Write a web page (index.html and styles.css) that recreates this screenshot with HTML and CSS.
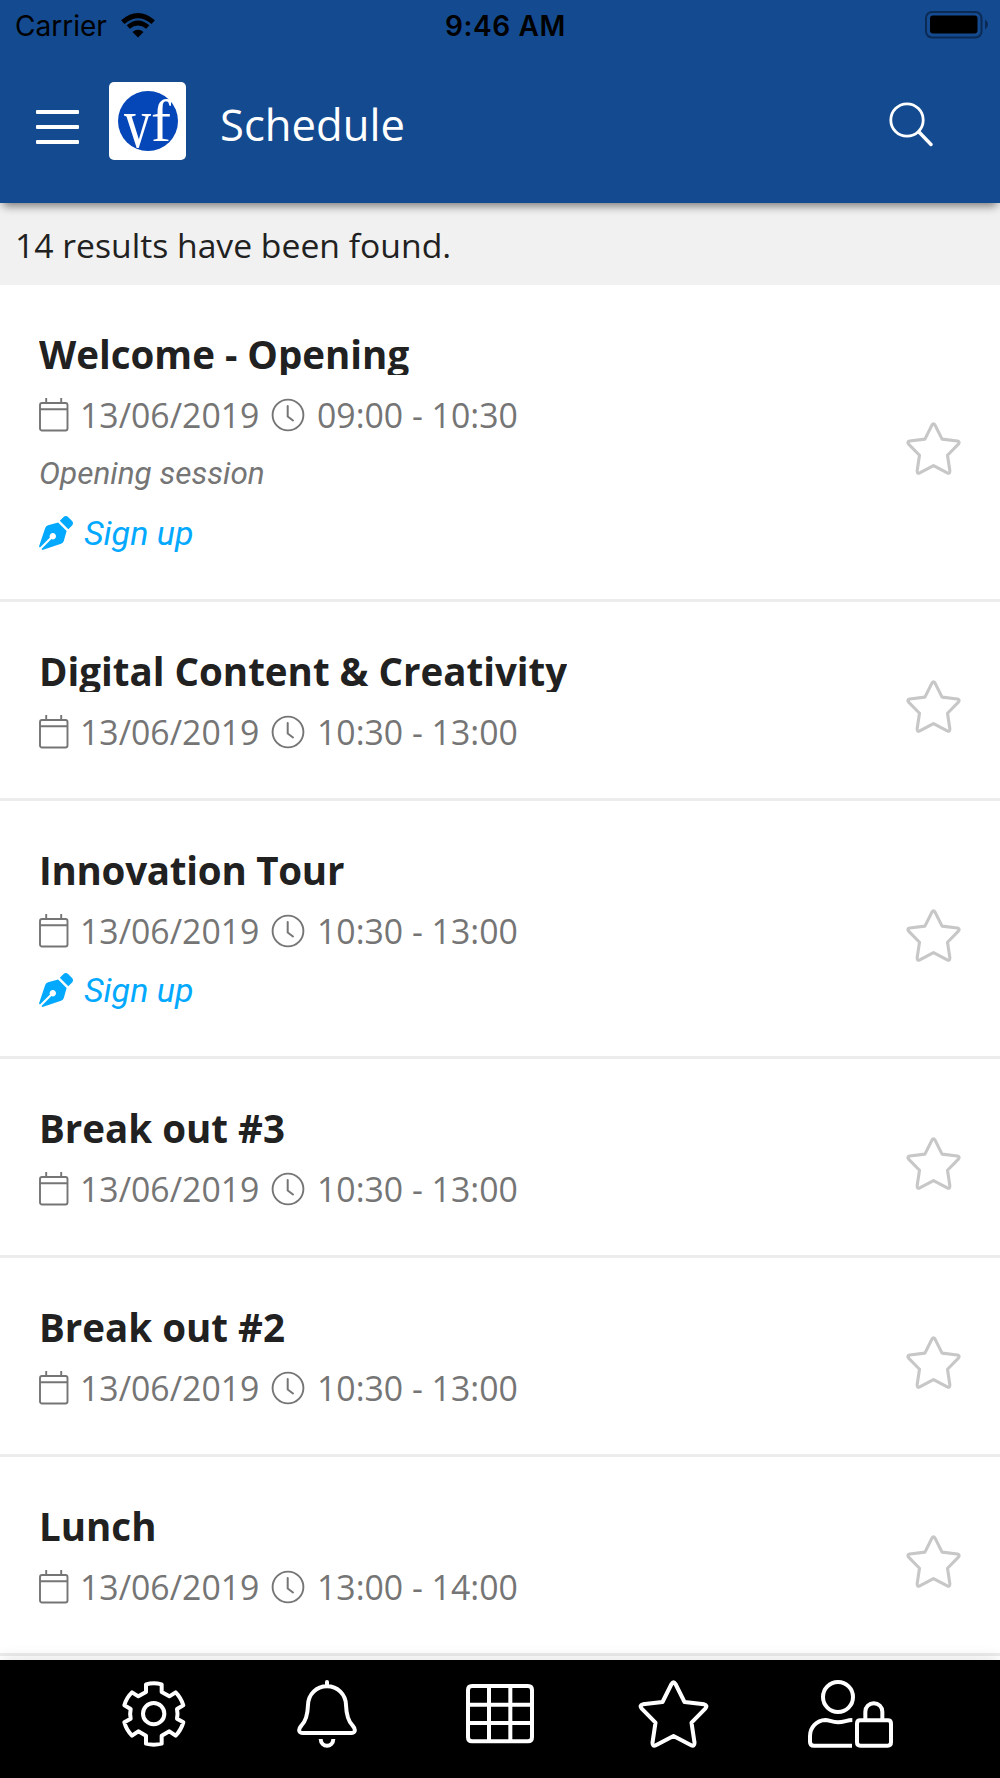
FILE: index.html
```
<!DOCTYPE html>
<html lang="en">
<head>
    <meta charset="UTF-8">
    <meta name="viewport" content="width=device-width, initial-scale=1.0">
    <title>Schedule</title>
    <link rel="stylesheet" href="styles.css">
</head>
<body>
    <!-- Shared icons -->
    <svg class="icon-defs" width="0" height="0">
        <symbol id="icon-star" viewBox="0 0 212 204">
            <path d="M100 12Q106 2 112 12L139 66L198 73Q209 76 202 85L160 128L169 188Q169 201 159 196L106 168L53 196Q43 201 43 188L52 128L10 85Q3 76 14 73L73 66Z" fill="none" stroke="currentColor" stroke-width="12" stroke-linejoin="round"/>
        </symbol>
        <symbol id="icon-calendar" viewBox="0 0 30 34">
            <path d="M3 5h23.500a2 2 0 0 1 2 2v23.500a2 2 0 0 1-2 2H3a2 2 0 0 1-2-2V7a2 2 0 0 1 2-2zM1 11.200h27.500M7.200 0v5M22.200 0v5" fill="none" stroke="currentColor" stroke-width="1.900"/>
        </symbol>
        <symbol id="icon-clock" viewBox="0 0 34 34">
            <circle cx="17" cy="17" r="15.400" fill="none" stroke="currentColor" stroke-width="1.900"/>
            <path d="M16.700 8v10.500l5.300 4" fill="none" stroke="currentColor" stroke-width="2" stroke-linecap="round" stroke-linejoin="round"/>
        </symbol>
        <symbol id="icon-pen" viewBox="0 0 512 512">
            <path fill="currentColor" d="M136.600 138.790a64 64 0 0 0-43.310 41.350L0 460l14.690 14.690L164.800 324.580c-2.990-6.260-4.800-13.210-4.800-20.580 0-26.510 21.490-48 48-48s48 21.490 48 48-21.490 48-48 48c-7.370 0-14.320-1.810-20.580-4.800L37.310 497.310 52 512l279.860-93.290a64 64 0 0 0 41.350-43.310L416 224 288 96l-151.400 42.790zm361.340-64.620l-60.110-60.110c-18.750-18.750-49.160-18.750-67.910 0l-56.550 56.550 128.020 128.020 56.550-56.550c18.750-18.750 18.750-49.150 0-67.910z"/>
        </symbol>
    </svg>

    <header class="app-header">
        <div class="status-bar">
            <div class="carrier">
                <span>Carrier</span>
                <svg class="wifi" viewBox="0 0 34 25">
                    <path d="M1.800 8.200Q17-5 32.200 8.200" transform="translate(0 1)" fill="none" stroke="#000" stroke-width="5"/>
                    <path d="M7.200 14Q17 5.800 26.800 14" fill="none" stroke="#000" stroke-width="4.800"/>
                    <path d="M11.500 19Q17 14.500 22.500 19L17 24.500z" fill="#000"/>
                </svg>
            </div>
            <div class="clock">9:46 AM</div>
            <svg class="battery" viewBox="0 0 64 28">
                <rect x="1" y="1" width="55.500" height="25.500" rx="6" fill="none" stroke="#0b2a54" stroke-width="2"/>
                <rect x="5" y="4.500" width="47.500" height="18" rx="3" fill="#000"/>
                <path d="M60 8.500q3 2 3 5t-3 5z" fill="#0b2a54"/>
            </svg>
        </div>
        <div class="nav-bar">
            <div class="menu-button">
                <span></span>
                <span></span>
                <span></span>
            </div>
            <div class="logo">
                <div class="logo-circle"><span class="logo-v">v</span><span class="logo-f">f</span></div>
            </div>
            <h1 class="page-title">Schedule</h1>
            <svg class="search" viewBox="0 0 44 45">
                <circle cx="18" cy="18" r="16.200" fill="none" stroke="#fff" stroke-width="2.800"/>
                <path d="M30 30l12 12.500" fill="none" stroke="#fff" stroke-width="3.400" stroke-linecap="round"/>
            </svg>
        </div>
    </header>

    <div class="results">14 results have been found.</div>

    <!-- Sessions -->
    <main class="session-list">
        <div class="session">
            <div class="session-info">
                <h2>Welcome - Opening</h2>
                <div class="session-time">
                    <svg class="calendar"><use href="#icon-calendar"/></svg>
                    <span class="date">13/06/2019</span>
                    <svg class="hours"><use href="#icon-clock"/></svg>
                    <span>09:00 - 10:30</span>
                </div>
                <div class="description">Opening session</div>
                <div class="sign-up"><svg><use href="#icon-pen"/></svg>Sign up</div>
            </div>
            <svg class="favorite"><use href="#icon-star"/></svg>
        </div>
        <div class="session">
            <div class="session-info">
                <h2>Digital Content &amp; Creativity</h2>
                <div class="session-time">
                    <svg class="calendar"><use href="#icon-calendar"/></svg>
                    <span class="date">13/06/2019</span>
                    <svg class="hours"><use href="#icon-clock"/></svg>
                    <span>10:30 - 13:00</span>
                </div>
            </div>
            <svg class="favorite"><use href="#icon-star"/></svg>
        </div>
        <div class="session">
            <div class="session-info">
                <h2 class="tight">Innovation Tour</h2>
                <div class="session-time">
                    <svg class="calendar"><use href="#icon-calendar"/></svg>
                    <span class="date">13/06/2019</span>
                    <svg class="hours"><use href="#icon-clock"/></svg>
                    <span>10:30 - 13:00</span>
                </div>
                <div class="sign-up"><svg><use href="#icon-pen"/></svg>Sign up</div>
            </div>
            <svg class="favorite"><use href="#icon-star"/></svg>
        </div>
        <div class="session">
            <div class="session-info">
                <h2>Break out #3</h2>
                <div class="session-time">
                    <svg class="calendar"><use href="#icon-calendar"/></svg>
                    <span class="date">13/06/2019</span>
                    <svg class="hours"><use href="#icon-clock"/></svg>
                    <span>10:30 - 13:00</span>
                </div>
            </div>
            <svg class="favorite"><use href="#icon-star"/></svg>
        </div>
        <div class="session">
            <div class="session-info">
                <h2>Break out #2</h2>
                <div class="session-time">
                    <svg class="calendar"><use href="#icon-calendar"/></svg>
                    <span class="date">13/06/2019</span>
                    <svg class="hours"><use href="#icon-clock"/></svg>
                    <span>10:30 - 13:00</span>
                </div>
            </div>
            <svg class="favorite"><use href="#icon-star"/></svg>
        </div>
        <div class="session">
            <div class="session-info">
                <h2>Lunch</h2>
                <div class="session-time">
                    <svg class="calendar"><use href="#icon-calendar"/></svg>
                    <span class="date">13/06/2019</span>
                    <svg class="hours"><use href="#icon-clock"/></svg>
                    <span>13:00 - 14:00</span>
                </div>
            </div>
            <svg class="favorite"><use href="#icon-star"/></svg>
        </div>
    </main>

    <!-- Bottom toolbar -->
    <footer class="tab-bar">
        <div class="tab">
            <svg width="68" height="68" viewBox="60 120 204 204">
                <path d="M138 133Q161 127 185 133V156L208 169L227 157Q243 173 250 196L231 207Q234 221 231 236L250 247Q243 270 227 287L208 274L185 287V311Q161 317 138 311V287L115 274L96 287Q79 270 73 247L92 236Q89 221 92 207L73 196Q79 173 96 157L115 169L138 156Z"/>
                <circle cx="161" cy="221" r="32"/>
            </svg>
        </div>
        <div class="tab">
            <svg width="60" height="68" viewBox="590 120 180 204">
                <path d="M680 126V139C712 139 736 163 737 195C738 225 745 245 757 257C768 270 764 279 752 279H608C596 279 592 270 603 257C615 245 622 225 623 195C624 163 648 139 680 139"/>
                <path class="clapper" d="M661 297C662 324 698 324 699 297"/>
            </svg>
        </div>
        <div class="tab">
            <svg width="68" height="68" viewBox="1098 120 204 204">
                <path d="M1116 138H1284Q1296 138 1296 150V292Q1296 304 1284 304H1116Q1104 304 1104 292V150Q1104 138 1116 138ZM1167 138V304M1231 138V304M1104 194H1296M1104 249H1296"/>
            </svg>
        </div>
        <div class="tab">
            <svg width="71" height="68"><use href="#icon-star"/></svg>
        </div>
        <div class="tab tab-user">
            <svg width="85" height="68" viewBox="774 120 255 204">
                <circle cx="864" cy="171" r="45"/>
                <path class="clapper" d="M907 240C890 240 883 247 864 247C845 247 838 240 826 240C800 241 780 262 780 288V305Q780 317 792 317H906"/>
                <path d="M931 241H1013Q1023 241 1023 251V307Q1023 317 1013 317H931Q921 317 921 307V251Q921 241 931 241ZM946 241V215A25.500 25.500 0 0 1 997 215V241"/>
            </svg>
        </div>
    </footer>
</body>
</html>
```
FILE: styles.css
```
* {
    margin: 0;
    padding: 0;
    box-sizing: border-box;
}

body {
    height: 1778px;
    overflow: hidden;
    background-color: #fff;
    color: #212121;
    font-family: "Open Sans", sans-serif;
    display: flex;
    flex-direction: column;
}

svg {
    display: block;
    flex-shrink: 0;
}

.icon-defs {
    position: absolute;
}

/* Header */
.app-header {
    position: relative;
    z-index: 1;
    flex-shrink: 0;
    height: 203px;
    background-color: #144a8f;
    box-shadow: 0 6px 9px -3px rgba(0, 0, 0, 0.5);
}

.status-bar {
    display: grid;
    grid-template-columns: 1fr auto 1fr;
    align-items: center;
    height: 50px;
    padding: 0 11px 0 15px;
    color: #000;
    font-family: Inter, sans-serif;
    font-size: 28px;
}

.carrier {
    display: flex;
    align-items: center;
    gap: 14px;
}

.carrier span,
.clock {
    padding-top: 1px;
}

.wifi {
    width: 34px;
    height: 25px;
}

.clock {
    padding-left: 7px;
    font-weight: 600;
    letter-spacing: 0.6px;
}

.battery {
    width: 64px;
    height: 28px;
    justify-self: end;
}

.nav-bar {
    display: flex;
    align-items: center;
    height: 142px;
    padding: 0 67px 0 36px;
}

.menu-button {
    display: flex;
    flex-direction: column;
    gap: 11px;
    width: 43px;
    margin-top: 11px;
}

.menu-button span {
    height: 4px;
    border-radius: 1px;
    background-color: #fff;
}

.logo {
    display: flex;
    align-items: center;
    justify-content: center;
    width: 77px;
    height: 78px;
    margin-left: 30px;
    border-radius: 5px;
    background-color: #fff;
}

.logo-circle {
    display: flex;
    justify-content: center;
    width: 60px;
    height: 60px;
    border-radius: 50%;
    background-color: #0546b8;
    color: #fff;
    font-family: "Liberation Serif", serif;
    font-size: 60px;
    line-height: 60px;
}

.logo-v {
    font-size: 54px;
    transform: translateY(7px) scaleY(1.35);
    transform-origin: 50% 46px;
}

.page-title {
    flex: 1;
    margin: 5px 0 0 34px;
    color: #fff;
    font-size: 43.6px;
    font-weight: 400;
    line-height: 60px;
}

.search {
    width: 44px;
    height: 45px;
    margin-top: 6px;
}

.results {
    flex-shrink: 0;
    height: 82px;
    padding-left: 15px;
    background-color: #f1f1f1;
    font-size: 33.7px;
    line-height: 85px;
}

/* Session list */
.session {
    display: flex;
    align-items: center;
    justify-content: space-between;
    padding: 50px 39px 43px;
    border-bottom: 3px solid #ececec;
}

.session h2 {
    height: 40px;
    overflow: hidden;
    font-size: 38.5px;
    font-weight: 700;
    line-height: 39px;
}

.session h2.tight {
    letter-spacing: -0.25px;
}

.session-time {
    display: flex;
    align-items: center;
    height: 46px;
    margin-top: 17px;
    color: #757575;
    font-size: 33.8px;
    line-height: 46px;
}

.calendar {
    width: 30px;
    height: 34px;
}

.date {
    flex-shrink: 0;
    width: 202px;
    padding-left: 11px;
}

.hours {
    width: 34px;
    height: 34px;
    margin-right: 12px;
}

.description {
    height: 46px;
    margin-top: 13px;
    color: #757575;
    font-family: Roboto, sans-serif;
    font-size: 31.5px;
    font-style: italic;
    line-height: 46px;
}

.sign-up {
    display: flex;
    align-items: center;
    height: 46px;
    margin-top: 13px;
    color: #03a9ff;
    font-family: Roboto, sans-serif;
    font-size: 34px;
    font-style: italic;
    line-height: 46px;
}

.sign-up svg {
    width: 34px;
    height: 34px;
    margin-right: 11px;
}

.favorite {
    width: 55px;
    height: 53px;
    margin-top: 6px;
    color: #c7c7c7;
}

/* Bottom toolbar */
.tab-bar {
    display: grid;
    grid-template-columns: repeat(5, 1fr);
    justify-items: center;
    flex-shrink: 0;
    height: 118px;
    margin-top: auto;
    padding: 20px 67px 0;
    background-color: #000;
    color: #fff;
    box-shadow: 0 -3px 15px -2px rgba(0, 0, 0, 0.12);
}

.tab svg {
    fill: none;
    stroke: #fff;
    stroke-width: 12px;
    stroke-linecap: round;
    stroke-linejoin: round;
}

.tab .clapper {
    stroke-linecap: butt;
}

.tab-user {
    padding-left: 8px;
}
```
